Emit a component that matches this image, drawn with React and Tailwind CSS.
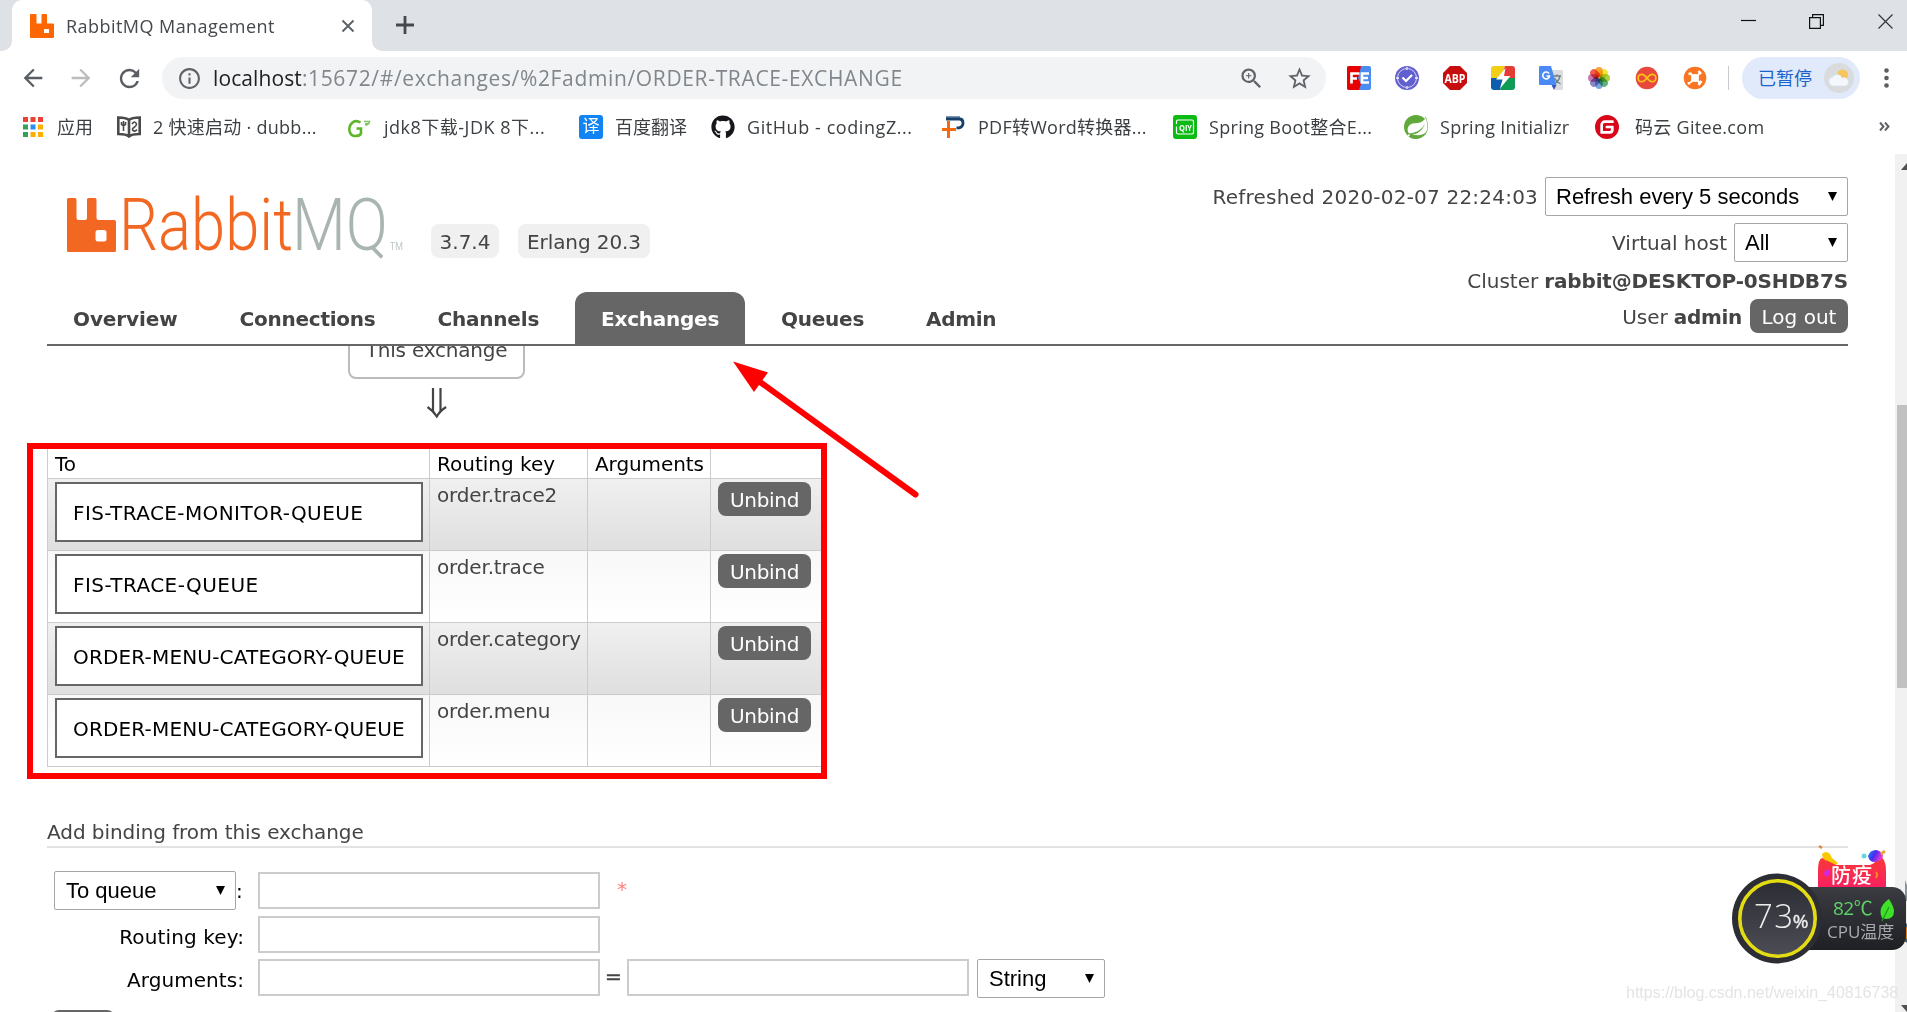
import React from "react";
import { FaGithub } from "react-icons/fa";
import { SiSpring, SiGitee } from "react-icons/si";
import { MdZoomIn, MdRefresh, MdArrowBack, MdArrowForward, MdInfoOutline, MdStarBorder } from "react-icons/md";

const ui = "font-['Open_Sans','Noto_Sans_CJK_SC',sans-serif]";

/* ---------- browser chrome ---------- */

function TabBar() {
  return (
    <div className="flex h-[51px] shrink-0 bg-[#dee1e6]">
      <div className="h-full w-[12px] bg-white">
        <div className="h-full w-full rounded-br-[10px] bg-[#dee1e6]" />
      </div>
      <div className="flex h-full w-[360px] items-center rounded-t-[10px] bg-white pl-[18px] pr-[17px]">
        <svg width="24" height="24" viewBox="0 0 24 24" className="mt-px">
          <path fill="#ff6600" fillRule="evenodd" d="M1 0h4.500q1 0 1 1v8.500h5V1q0-1 1-1h3.500q1 0 1 1v8.500H23q1 0 1 1V23q0 1-1 1H1q-1 0-1-1V1Q0 0 1 0ZM14 15v4h5v-4Z" />
        </svg>
        <span className="ml-[12px] whitespace-nowrap pt-px text-[18px] tracking-[0.45px] text-[#45494d]">RabbitMQ Management</span>
        <svg width="14" height="14" viewBox="0 0 14 14" className="ml-auto" stroke="#5f6368" strokeWidth="2">
          <path d="M1.500 1.500l11 11M12.500 1.500l-11 11" />
        </svg>
      </div>
      <div className="h-full w-[12px] bg-white">
        <div className="h-full w-full rounded-bl-[10px] bg-[#dee1e6]" />
      </div>
      <svg width="18" height="18" viewBox="0 0 18 18" className="ml-[12px] mt-[16px]" stroke="#45494d" strokeWidth="2.800">
        <path d="M9 0v18M0 9h18" />
      </svg>
      <div className="ml-auto flex pr-[14px] pt-[14px]">
        <svg width="15" height="15" className="mr-[53px]" stroke="#111" strokeWidth="1.200">
          <path d="M0 6.500h15" />
        </svg>
        <svg width="15" height="15" className="mr-[54px]" stroke="#111" strokeWidth="1.200" fill="none">
          <path d="M.6 3.600h10.800v10.800H.6zM3.600 3.600V.6h10.800v10.800h-3" />
        </svg>
        <svg width="15" height="15" stroke="#333" strokeWidth="1.200">
          <path d="M.5.5l14 14M14.500.5l-14 14" />
        </svg>
      </div>
    </div>
  );
}

const petals = [
  ["#f79a1b", 0], ["#f4e21a", 45], ["#a3cc32", 90], ["#4fa96b", 135],
  ["#6a9fdc", 180], ["#7f78c4", 225], ["#c26aa8", 270], ["#ef4a38", 315],
];

function Extensions() {
  return (
    <div className="flex items-center gap-[24px]">
      <svg width="24" height="24" viewBox="0 0 24 24">
        <rect width="24" height="24" rx="2" fill="#4a8cf0" />
        <path d="M2 0h12l-1.500 7-1.500 5 3 6-2 6H2q-2 0-2-2V2Q0 0 2 0Z" fill="#e60000" />
        <path d="M12.500 7.500H4.500v10M4.500 12.500H10M22 7.500h-7v9h7M15 12h6" stroke="#fff" strokeWidth="2.700" fill="none" />
      </svg>
      <svg width="24" height="24" viewBox="0 0 24 24">
        <circle cx="12" cy="12" r="12" fill="#625fce" />
        <circle cx="12" cy="12" r="9.500" fill="none" stroke="#d6d5f6" strokeWidth="1" strokeDasharray="12.900 2" strokeDashoffset="-1" />
        <path d="M12 1v3M12 20v3M1 12h3M20 12h3" stroke="#fff" strokeWidth="1.300" />
        <path d="M7.500 11.500l3.500 3.500 6-6" stroke="#fff" strokeWidth="2.200" fill="none" />
      </svg>
      <svg width="24" height="24" viewBox="0 0 24 24">
        <path d="M7 0h10l7 7v10l-7 7H7l-7-7V7Z" fill="#c70d0d" />
        <text x="12" y="16.500" fontSize="12.500" fontWeight="700" fill="#fff" textAnchor="middle" textLength="21" lengthAdjust="spacingAndGlyphs">ABP</text>
      </svg>
      <svg width="24" height="24" viewBox="0 0 24 24">
        <clipPath id="boltTile"><rect width="24" height="24" rx="3" /></clipPath>
        <g clipPath="url(#boltTile)">
          <path fill="#f2cf16" d="M0 0h14L10 12H0z" />
          <path fill="#e53c35" d="M14 0h10v12H10z" />
          <path fill="#0d5fae" d="M0 12h14L9 24H0z" />
          <path fill="#0f9b54" d="M14 12h10v12H9z" />
          <path fill="#fff" d="M14.500 2L5 13.500h6.500L9 22.500 19.500 10H13z" />
        </g>
      </svg>
      <svg width="24" height="24" viewBox="0 0 24 24">
        <path d="M10 4h13q1 0 1 1v18q0 1-1 1h-7z" fill="#dcdcdc" />
        <path d="M14 10h8M18 8.500v2M21 10q-1 5-6 8M15.500 12q2 4 6 6" stroke="#6b7f86" strokeWidth="1.300" fill="none" />
        <path d="M12.500 19h5l-2.500 5z" fill="#3a53c5" />
        <path d="M1 0h11l5.500 19H1q-1 0-1-1V1Q0 0 1 0Z" fill="#4a8af4" />
        <path d="M10 7.600A3.400 3.400 0 1 0 10.500 10H7.500" stroke="#fff" strokeWidth="1.600" fill="none" />
      </svg>
      <svg width="24" height="24" viewBox="0 0 24 24">
        {petals.map(([color, angle]) => (
          <rect key={angle} x="8.300" y="1" width="7.400" height="10.500" rx="3.700" fill={color} className="mix-blend-multiply" fillOpacity="0.9" transform={`rotate(${angle} 12 12)`} />
        ))}
      </svg>
      <svg width="24" height="24" viewBox="0 0 24 24">
        <circle cx="12" cy="12" r="11.300" fill="#e9493c" />
        <path d="M12 12C10 9.500 8.500 8.300 6.800 8.300a3.700 3.700 0 0 0 0 7.400c1.700 0 3.200-1.200 5.200-3.700s3.500-3.700 5.200-3.700a3.700 3.700 0 0 1 0 7.400c-1.700 0-3.200-1.200-5.200-3.700Z" fill="none" stroke="#f9c80e" strokeWidth="1.700" />
      </svg>
      <svg width="24" height="24" viewBox="0 0 24 24">
        <circle cx="12" cy="12" r="11.300" fill="#f97423" />
        <circle cx="12" cy="12" r="4" fill="#fff" />
        <path d="M7.500 7.500l9 9M16.500 7.500l-9 9" stroke="#fff" strokeWidth="2" />
        <path d="M5.500 8l3-.5M15.500 19l3-4M15.500 5l2.500 3M6 16v2.500" stroke="#fff" strokeWidth="2.600" />
      </svg>
    </div>
  );
}

function Toolbar() {
  return (
    <div className="flex h-[54px] shrink-0 items-center bg-white">
      <div className="ml-[19px] flex w-[143px] items-center">
        <MdArrowBack className="size-[28px] text-[#5a5e62]" />
        <MdArrowForward className="ml-[20px] size-[28px] text-[#bbbdbf]" />
        <MdRefresh className="ml-[20px] size-[29px] text-[#5a5e62]" />
      </div>
      <div className="flex h-[42px] w-[1164px] items-center rounded-full bg-[#f1f3f4] pl-[15px] pr-[13px]">
        <MdInfoOutline className="size-[25px] text-[#5f6368]" />
        <span className="ml-[11px] whitespace-nowrap pt-px text-[21px] tracking-[0.65px] text-[#80868b]">
          <span className="tracking-[0.1px] text-[#202124]">localhost</span>:15672/#/exchanges/%2Fadmin/ORDER-TRACE-EXCHANGE
        </span>
        <MdZoomIn className="ml-auto size-[27px] text-[#5f6368]" />
        <MdStarBorder className="ml-[21px] size-[27px] text-[#5f6368]" />
      </div>
      <div className="ml-[21px]"><Extensions /></div>
      <div className="ml-[21px] h-[24px] w-px bg-[#c8cacd]" />
      <div className="ml-[13px] flex h-[42px] w-[118px] items-center rounded-full bg-[#e1eafa] pl-[16px]">
        <span className="whitespace-nowrap text-[18px] text-[#1a62cc]">已暂停</span>
        <svg width="30" height="30" viewBox="0 0 30 30" className="ml-[12px]">
          <circle cx="15" cy="15" r="15" fill="#d9dbdc" />
          <circle cx="18.500" cy="12" r="5.500" fill="#f8c55c" />
          <path d="M9 23a4.500 4.500 0 0 1-.5-8.900 5.200 5.200 0 0 1 9.500.9 4.200 4.200 0 0 1 4 8z" fill="#f4f8fd" stroke="#cfe0f3" strokeWidth=".6" />
        </svg>
      </div>
      <svg width="5" height="20" viewBox="0 0 5 20" className="ml-[24px]" fill="#5a5e62">
        <circle cx="2.500" cy="2.500" r="2.300" />
        <circle cx="2.500" cy="10" r="2.300" />
        <circle cx="2.500" cy="17.500" r="2.300" />
      </svg>
    </div>
  );
}

function AppsIcon() {
  const colors = ["#ea4335", "#ea4335", "#ea4335", "#2fa35a", "#2f8df0", "#fbaf00", "#2fa35a", "#fbaf00", "#fbaf00"];
  return (
    <svg width="20" height="20" viewBox="0 0 20 20">
      {colors.map((c, i) => (
        <rect key={i} x={(i % 3) * 7.500} y={Math.floor(i / 3) * 7.500} width="5" height="5" fill={c} />
      ))}
    </svg>
  );
}

function BookIcon() {
  return (
    <svg width="24" height="22" viewBox="0 0 24 22" fill="none" stroke="#4a4a4a" strokeWidth="2.600">
      <path d="M12 4C9 1.500 6 1.500 1.300 1.500v16.500c4 0 8 0 10.700 2.500 2.700-2.500 6.700-2.500 10.700-2.500V1.500C18 1.500 15 1.500 12 4Zm0 0v16" />
      <path d="M6.500 5v4m-2-3v2.500q2 2 4 0V6M6.500 9v6M15 8q3-4 4.500 0 0 2-2.500 3.500t-1 3q2 1.500 4-1" strokeWidth="1.600" />
    </svg>
  );
}

function GreenGIcon() {
  return (
    <svg width="24" height="22" viewBox="0 0 24 22" fill="none">
      <path d="M13.500 6.500Q8.500 3.500 5 7t-2.500 8 5 5q5 .2 6.500-2.500v-5H9.500" stroke="#5db52b" strokeWidth="2.600" />
      <path d="M17 5.500h5.500q0 2.500-4 4M18 8l3.500-.5" stroke="#83c45c" strokeWidth="1.500" />
    </svg>
  );
}

function TranslateIcon() {
  return (
    <span className="flex size-[24px] items-center justify-center rounded-[3px] bg-[#1283f3] text-[17px] leading-none text-white">
      <span className="-mt-[3px]">译</span>
    </span>
  );
}

function PdfIcon() {
  return (
    <svg width="24" height="22" viewBox="0 0 24 22" fill="none">
      <path d="M4 1h14" stroke="#7d98b3" strokeWidth="2" />
      <path d="M4 3h13.500Q21 3 21 7t-4 4.800h-2.500" stroke="#173f6b" strokeWidth="2.800" />
      <path d="M6.500 5v17M0 13.500h14" stroke="#f36a10" strokeWidth="3" />
    </svg>
  );
}

function IqiyiIcon() {
  return (
    <svg width="24" height="24" viewBox="0 0 24 24" fill="none" stroke="#fff">
      <rect width="24" height="24" rx="3" fill="#0bbb13" stroke="none" />
      <path d="M3.500 9V6.500Q3.500 5 5 5h14q1.500 0 1.500 1.500v11q0 1.500-1.500 1.500H5q-1.500 0-1.500-1.500v-6" strokeWidth="1.200" />
      <text x="12.500" y="15.500" fontSize="9.500" fontWeight="700" fill="#fff" stroke="none" textAnchor="middle" textLength="13" lengthAdjust="spacingAndGlyphs">QIY</text>
    </svg>
  );
}

const bookmarks = [
  { label: "应用", icon: <AppsIcon />, item: "w-[94px] gap-[14px]", text: "" },
  { label: "2 快速启动 · dubb...", icon: <BookIcon />, item: "w-[230px] gap-[12px]", text: "tracking-[0.27px]" },
  { label: "jdk8下载-JDK 8下...", icon: <GreenGIcon />, item: "w-[232px] gap-[13px]", text: "tracking-[0.5px]" },
  { label: "百度翻译", icon: <TranslateIcon />, item: "w-[132px] gap-[12px]", text: "" },
  { label: "GitHub - codingZ...", icon: <FaGithub className="size-[24px] text-[#15171a]" />, item: "w-[231px] gap-[12px]", text: "tracking-[0.57px]" },
  { label: "PDF转Word转换器...", icon: <PdfIcon />, item: "w-[231px] gap-[12px]", text: "tracking-[0.25px]" },
  { label: "Spring Boot整合E...", icon: <IqiyiIcon />, item: "w-[231px] gap-[12px]", text: "tracking-[0.3px]" },
  { label: "Spring Initializr", icon: <SiSpring className="size-[24px] text-[#5fa839]" />, item: "w-[191px] gap-[12px]", text: "tracking-[0.28px]" },
  { label: "码云 Gitee.com", icon: <SiGitee className="size-[24px] text-[#d8071a]" />, item: "w-[190px] gap-[16px]", text: "tracking-[0.3px]" },
];

function Bookmarks() {
  return (
    <div className="flex h-[49px] shrink-0 items-center bg-white pb-[6px] pl-[23px] pr-[17px]">
      {bookmarks.map((b) => (
        <div key={b.label} className={`flex shrink-0 items-center ${b.item}`}>
          <span className="shrink-0">{b.icon}</span>
          <span className={`whitespace-nowrap text-[18px] leading-[26px] text-[#3c4043] ${b.text}`}>{b.label}</span>
        </div>
      ))}
      <svg width="11" height="9" viewBox="0 0 11 9" className="ml-auto" fill="none" stroke="#5f6368" strokeWidth="2">
        <path d="M1 .5l3.500 4L1 8.500M6 .5l3.500 4L6 8.500" />
      </svg>
    </div>
  );
}

/* ---------- management page ---------- */

function Select({ label, className }) {
  return (
    <div className={`flex items-center justify-between rounded-[2px] border border-[#a6a6a6] bg-white font-['Liberation_Sans',sans-serif] text-[22px] leading-none text-black ${className}`}>
      <span className="whitespace-nowrap">{label}</span>
      <svg width="9" height="9" viewBox="0 0 9 9"><path d="M0 0h9L4.500 9z" /></svg>
    </div>
  );
}

function Logo() {
  return (
    <svg width="340" height="90" viewBox="0 -13 340 90">
      <path fill="#f26822" fillRule="evenodd" d="M1.500 5H8q1.500 0 1.500 1.500V25q0 2 2 2H18q2 0 2-2V6.500Q20 5 21.500 5H28q1.500 0 1.500 1.500V25q0 2 2 2H47.500q1.500 0 1.500 1.500v29Q49 59 47.500 59h-46Q0 59 0 57.500v-51Q0 5 1.500 5ZM31 37q-2.500 0-2.500 2.500V46q0 2.500 2.500 2.500h6q2.500 0 2.500-2.500v-6.500Q39.500 37 37 37Z" />
      <text x="52" y="57" fontFamily="Roboto" fontSize="72" fontWeight="300" fill="#f26822" textLength="174" lengthAdjust="spacingAndGlyphs">Rabbit</text>
      <text x="225" y="57" fontFamily="Roboto" fontSize="72" fontWeight="300" fill="#a9b6b0" textLength="96" lengthAdjust="spacingAndGlyphs">MQ</text>
      <text x="323" y="57" fontFamily="Open Sans" fontSize="11" fill="#b9c3be" textLength="13" lengthAdjust="spacingAndGlyphs">TM</text>
    </svg>
  );
}

const tabs = [
  { name: "Overview", text: "tracking-[-0.1px]" },
  { name: "Connections", text: "tracking-[-0.25px]" },
  { name: "Channels", text: "tracking-[-0.2px]" },
  { name: "Exchanges", text: "tracking-[-0.25px]", active: true },
  { name: "Queues", text: "tracking-[-0.25px]" },
  { name: "Admin", text: "tracking-[-0.3px]" },
];

function PageHeader() {
  return (
    <div className="ml-[47px] flex h-[192px] w-[1801px] shrink-0 justify-between border-b-2 border-[#666]">
      <div className="flex flex-col">
        <div className="flex h-[138px] items-start pl-[20px]">
          <div className="mt-[26px] w-[364px]"><Logo /></div>
          <span className="mt-[70px] flex h-[34px] w-[68px] items-center justify-center rounded-[8px] bg-[#f0f0f0] pt-px">3.7.4</span>
          <span className="ml-[19px] mt-[70px] flex h-[34px] w-[132px] items-center justify-center whitespace-nowrap rounded-[8px] bg-[#f0f0f0] pt-px tracking-[-0.1px]">Erlang 20.3</span>
        </div>
        <div className="flex h-[52px] gap-[10px] font-bold">
          {tabs.map((t) => (
            <div key={t.name} className={`flex items-center rounded-t-[12px] px-[26px] pt-[2px] ${t.text} ${t.active ? "bg-[#666] text-white" : ""}`}>{t.name}</div>
          ))}
        </div>
      </div>
      <div className="flex flex-col items-end whitespace-nowrap pt-[23px]">
        <div className="flex h-[39px] items-center">
          <span className="mr-[7px] tracking-[0.21px]">Refreshed 2020-02-07 22:24:03</span>
          <Select label="Refresh every 5 seconds" className="h-[39px] w-[303px] pl-[10px] pr-[10px]" />
        </div>
        <div className="mt-[7px] flex h-[39px] items-center">
          <span className="mr-[7px]">Virtual host</span>
          <Select label="All" className="h-[39px] w-[114px] pl-[10px] pr-[10px]" />
        </div>
        <div className="flex h-[37px] items-center">
          <span>Cluster</span>
          <b className="ml-[6px] tracking-[-0.15px]">rabbit@DESKTOP-0SHDB7S</b>
        </div>
        <div className="flex h-[34px] items-center">
          <span className="pt-[2px]">User</span>
          <b className="ml-[6px] pt-[2px] tracking-[-0.3px]">admin</b>
          <span className="ml-[8px] flex h-[34px] w-[98px] items-center justify-center rounded-[8px] bg-[#666] pt-[2px] text-white">Log out</span>
        </div>
      </div>
    </div>
  );
}

const bindings = [
  { queue: "FIS-TRACE-MONITOR-QUEUE", key: "order.trace2", text: "tracking-[0.4px]" },
  { queue: "FIS-TRACE-QUEUE", key: "order.trace", text: "tracking-[0.44px]" },
  { queue: "ORDER-MENU-CATEGORY-QUEUE", key: "order.category", text: "tracking-[0.17px]" },
  { queue: "ORDER-MENU-CATEGORY-QUEUE", key: "order.menu", text: "tracking-[0.17px]" },
];

function Bindings() {
  const cell = "border-l border-[#ccc] pl-[7px]";
  return (
    <div className="ml-[27px] h-[336px] w-[800px] shrink-0 border-[6px] border-[#f00] pl-[14px]">
      <div className="grid h-[29px] grid-cols-[382px_158px_123px_111px] leading-[31px] text-black">
        <div className={cell}>To</div>
        <div className={cell}>Routing key</div>
        <div className={`tracking-[-0.08px] ${cell}`}>Arguments</div>
        <div className={cell} />
      </div>
      {bindings.map((b, i) => (
        <div
          key={b.key}
          className={`grid h-[72px] grid-cols-[382px_158px_123px_111px] border-t border-[#ccc] bg-gradient-to-b ${i % 2 ? "from-[#f8f8f8] to-white" : "from-[#f0f0f0] to-[#dfdfdf]"}`}
        >
          <div className={`pt-[3px] ${cell}`}>
            <div className={`flex h-[60px] w-[368px] items-center border-2 border-[#666] bg-white pl-[16px] pt-[2px] text-black ${b.text}`}>{b.queue}</div>
          </div>
          <div className={`pt-[5px] leading-[22px] tracking-[-0.17px] ${cell}`}>{b.key}</div>
          <div className={cell} />
          <div className={`pt-[3px] ${cell}`}>
            <div className="flex h-[34px] w-[93px] items-center justify-center rounded-[8px] bg-[#666] pt-[2px] tracking-[-0.3px] text-white">Unbind</div>
          </div>
        </div>
      ))}
      <div className="h-px bg-[#ccc]" />
    </div>
  );
}

function BindingForm() {
  const field = "h-[37px] border-2 border-[#ccc] bg-white";
  return (
    <div className="ml-[54px] mt-[23px] flex shrink-0 flex-col text-black">
      <div className="flex h-[39px] items-center">
        <Select label="To queue" className="h-[39px] w-[182px] pl-[11px] pr-[10px]" />
        <span className="w-[22px]">:</span>
        <div className={`w-[342px] ${field}`} />
        <span className="mb-[4px] ml-[17px] text-[#ff7f7f]">*</span>
      </div>
      <div className="mt-[6px] flex h-[37px] items-center">
        <span className="mt-[4px] w-[190px] text-right tracking-[0.12px]">Routing key:</span>
        <div className={`ml-[14px] w-[342px] ${field}`} />
      </div>
      <div className="mt-[6px] flex h-[39px]">
        <span className="w-[190px] text-right leading-[42px] tracking-[0.05px]">Arguments:</span>
        <div className={`ml-[14px] w-[342px] ${field}`} />
        <span className="w-[27px] text-center leading-[35px] text-[#444] [-webkit-text-stroke:0.5px_#444]">=</span>
        <div className={`w-[342px] ${field}`} />
        <Select label="String" className="ml-[8px] h-[39px] w-[128px] pl-[11px] pr-[10px]" />
      </div>
      <div className="-ml-[3px] mt-[12px] h-[34px] w-[64px] rounded-[8px] bg-[#666]" />
    </div>
  );
}

function Scrollbar() {
  return (
    <div className="flex w-[12px] shrink-0 flex-col bg-[#f1f1f1]">
      <svg width="12" height="16" viewBox="0 0 12 16" className="shrink-0"><path d="M6 16l6-7v7z" fill="#505050" /></svg>
      <div className="ml-[2px] mt-[235px] h-[283px] shrink-0 bg-[#c1c1c1]" />
      <svg width="12" height="8" viewBox="0 0 12 8" className="mt-auto shrink-0"><path d="M6 1h6v7z" fill="#505050" /></svg>
    </div>
  );
}

function CpuWidget() {
  return (
    <div className="absolute left-[1732px] top-[844px] h-[122px] w-[175px] overflow-hidden">
      <svg width="175" height="122" viewBox="0 0 175 122">
        <defs>
          <linearGradient id="banner" x1="0" y1="0" x2="0" y2="1"><stop offset="0" stopColor="#f83a36" /><stop offset="1" stopColor="#fa1e64" /></linearGradient>
          <linearGradient id="capsule" x1="0" y1="0" x2="0" y2="1"><stop offset="0" stopColor="#3b3c42" /><stop offset="1" stopColor="#1f2024" /></linearGradient>
          <linearGradient id="dial" x1="0" y1="0" x2="0" y2="1"><stop offset="0" stopColor="#2b2c34" /><stop offset="1" stopColor="#4d4e55" /></linearGradient>
          <linearGradient id="balloon" x1="0" y1="0" x2="1" y2="0.400"><stop offset="0" stopColor="#1b8cf5" /><stop offset=".5" stopColor="#4a2bf0" /><stop offset="1" stopColor="#f03ad0" /></linearGradient>
        </defs>
        <path d="M173 36q1 3 2 5v16h-2z" fill="#8d9296" />
        <circle cx="179" cy="89" r="9" fill="#e87c13" stroke="#47626e" strokeWidth="3" />
        <path d="M86 46V27Q86 15 90 14q10 2 14 7h34q6-2 10-9 6 3 6 15v19z" fill="url(#banner)" />
        <path d="M90 10q4-4 8 0l2 4 6 5-2 2-8-4q-6-1-6-7Z" fill="#fbc800" />
        <path d="M87 2l3 2" stroke="#e8853c" strokeWidth="2.500" />
        <circle cx="132" cy="12" r="2.500" fill="#6bd3df" />
        <path d="M136 12q2-6 8-6 6 1 7 6-1 5-8 6-6 0-7-6Z" fill="url(#balloon)" />
        <path d="M149 10l4-3" stroke="#f2a13f" strokeWidth="3" />
        <path d="M92 29q0-3 6-4-1 3-1 6-4 4-5-2Z" fill="#d726e5" />
        <path d="M144 28q2 2 0 6" stroke="#f78a1d" strokeWidth="2" fill="none" />
        <rect x="60" y="43" width="114" height="63" rx="14" fill="url(#capsule)" />
        <circle cx="45" cy="74.500" r="45" fill="#2d2e35" />
        <circle cx="45.500" cy="74.500" r="37.700" fill="url(#dial)" stroke="#e3dc14" strokeWidth="3.600" />
        <path d="M150 74q-5-11 7-19 5 8 5 12 0 8-8 8z" fill="#3fe02a" />
        <path d="M150 77q4-8 7-14" stroke="#219a1a" strokeWidth="1.300" fill="none" />
      </svg>
      <div className="absolute left-[22px] top-[52px] flex items-baseline leading-[40px] text-[#ececec]">
        <span className="text-[33px] font-light tracking-[1.500px]">73</span>
        <span className="-ml-[2px] text-[19px] [-webkit-text-stroke:0.4px_#ececec]">%</span>
      </div>
      <div className="absolute left-[99px] top-[19px] text-[20px] font-medium leading-[26px] tracking-[1px] text-white">防疫</div>
      <div className="absolute left-[101px] top-[51px] whitespace-nowrap text-[19px] leading-[26px] tracking-[-0.5px] text-[#5bd267]">82℃</div>
      <div className="absolute left-[95px] top-[75px] whitespace-nowrap text-[17px] leading-[26px] text-[#a7abb0]">CPU温度</div>
    </div>
  );
}

export default function App() {
  return (
    <div className={`relative flex h-[1012px] w-[1907px] flex-col overflow-hidden bg-white ${ui}`}>
      <TabBar />
      <Toolbar />
      <Bookmarks />
      <div className="flex min-h-0 flex-1">
        <div className="flex w-[1895px] flex-col overflow-hidden font-['DejaVu_Sans',sans-serif] text-[20px] leading-[24px] text-[#444]">
          <PageHeader />
          <div className="flex min-h-0 flex-1 flex-col overflow-hidden">
            <div className="-mt-[26px] ml-[348px] flex h-[59px] w-[177px] shrink-0 items-center justify-center rounded-[8px] border-2 border-[#bbb] tracking-[-0.2px]">This exchange</div>
            <div className="h-[64px] shrink-0 pl-[426px] pt-[9px]">
              <svg width="22" height="30" viewBox="0 0 22 30" fill="none" stroke="#444" strokeWidth="2.200">
                <path d="M7 0v24M14.500 0v24M1.500 19q6 4 9.300 9.500 3-5.500 9.300-9.500" />
              </svg>
            </div>
            <Bindings />
            <div className="ml-[47px] flex h-[69px] w-[1801px] shrink-0 items-end border-b-2 border-[#e2e2e2] pb-[2px] tracking-[-0.07px]">Add binding from this exchange</div>
            <BindingForm />
          </div>
        </div>
        <Scrollbar />
      </div>
      <svg width="190" height="142" viewBox="0 0 190 142" className="absolute left-[730px] top-[358px]">
        <path d="M28 22.500L185.500 136.500" stroke="#f00" strokeWidth="6" strokeLinecap="round" />
        <path d="M3 3.500l35 11L24 34z" fill="#f00" />
      </svg>
      <CpuWidget />
      <div className="absolute left-[1626px] top-[982px] whitespace-nowrap font-['Liberation_Sans',sans-serif] text-[16px] leading-[22px] text-[#e4e4e4]">https://blog.csdn.net/weixin_40816738</div>
    </div>
  );
}
